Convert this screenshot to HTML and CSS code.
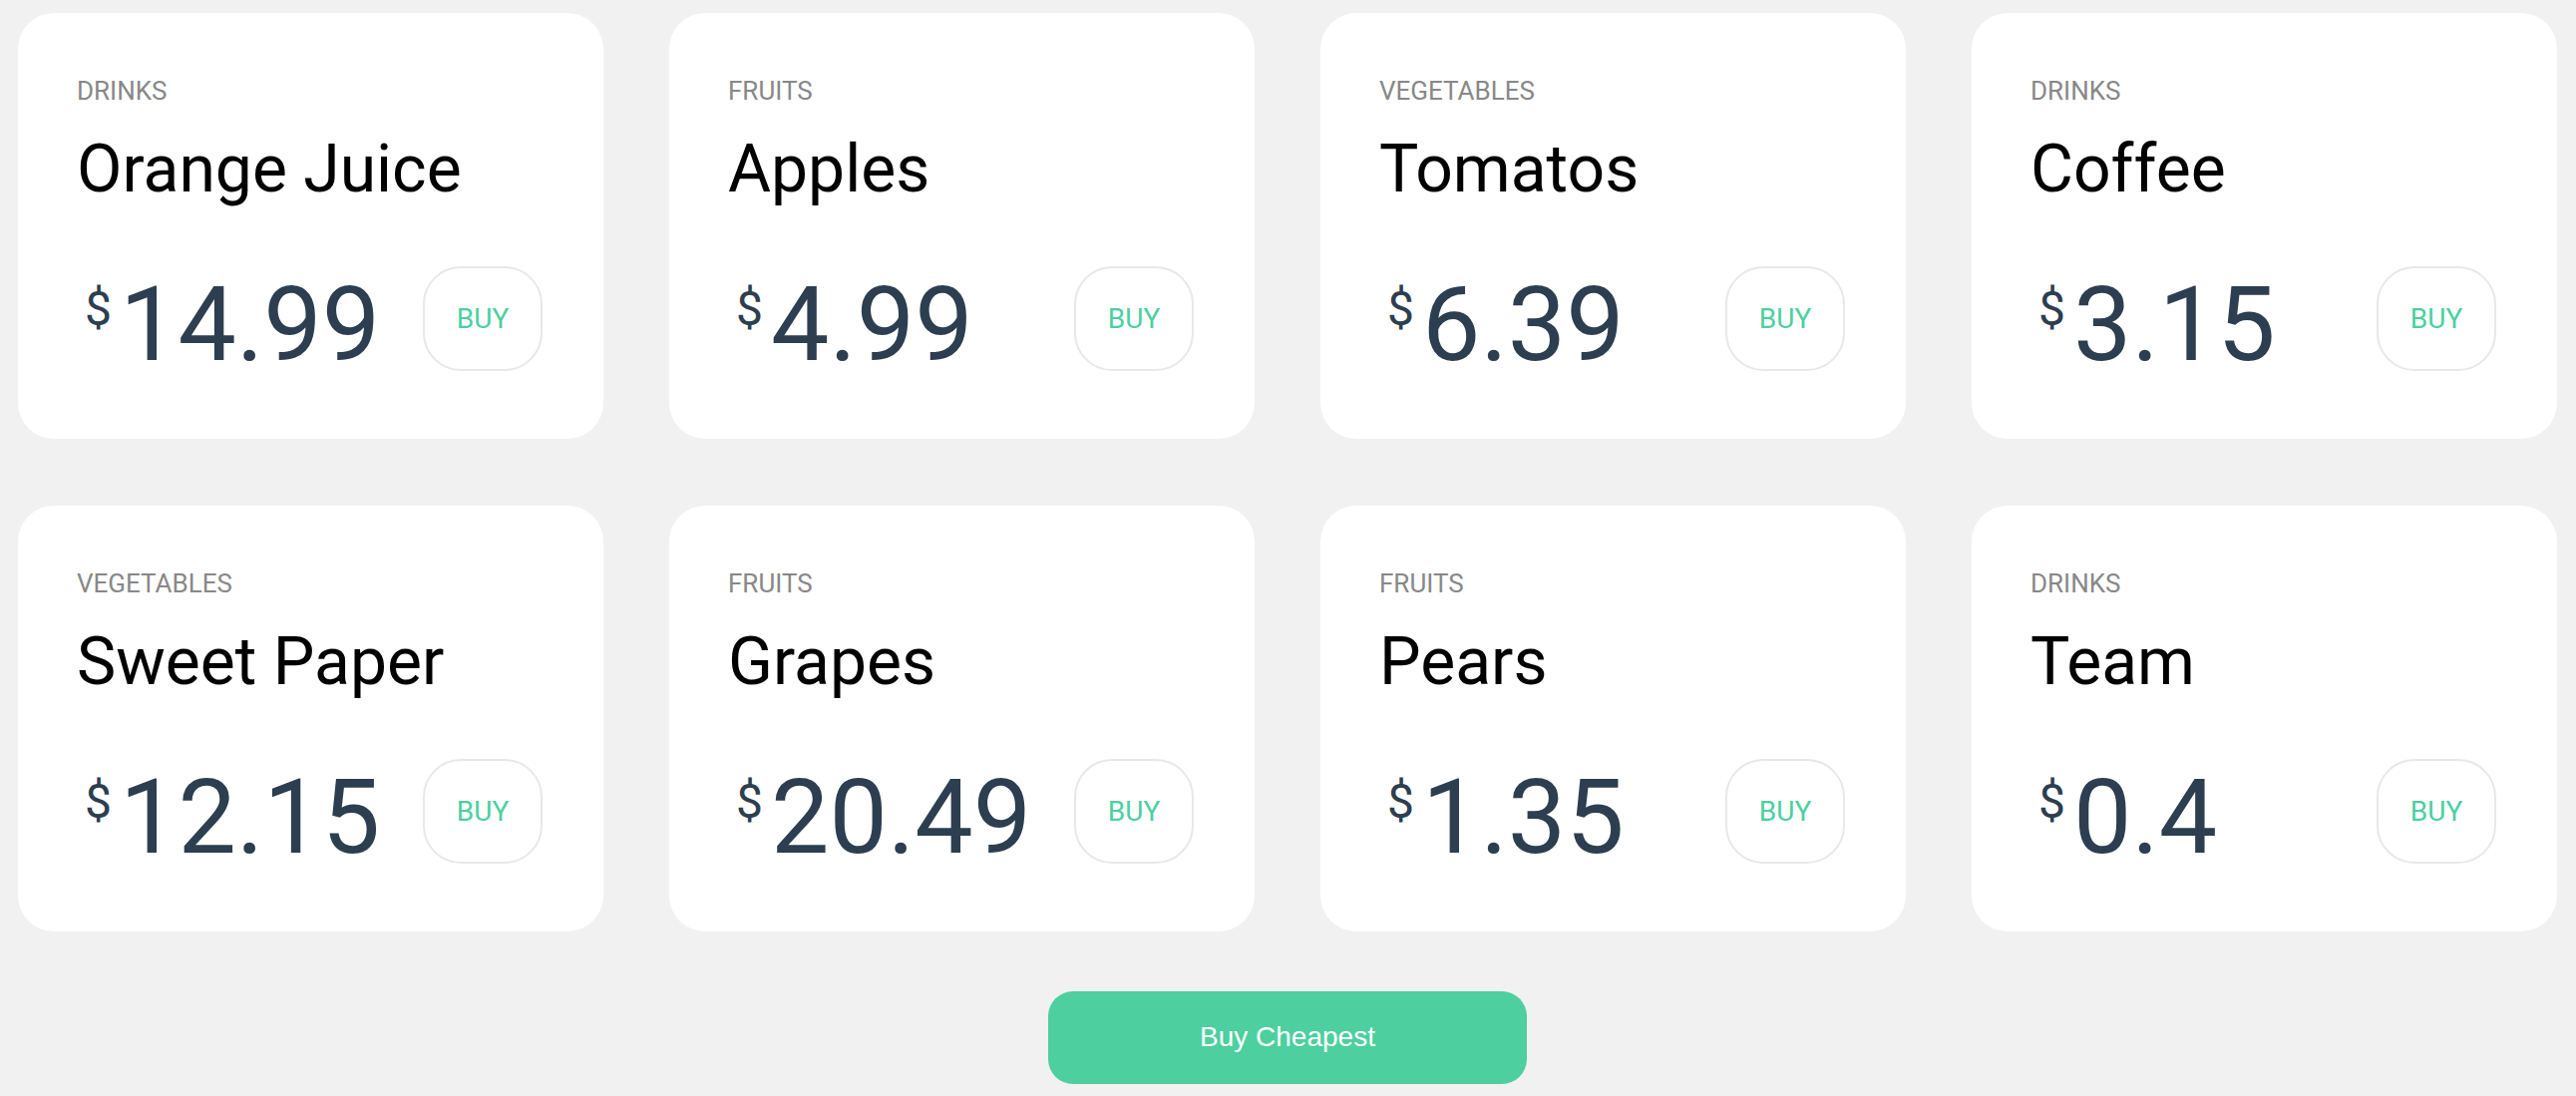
FILE: index.html
```html
<!DOCTYPE html>
<html lang="en">
<head>
<meta charset="utf-8">
<title>Products</title>
<link rel="stylesheet" href="styles.css">
</head>
<body>
<div class="page">
  <div class="grid">
    <div class="card">
      <div class="category">DRINKS</div>
      <div class="name">Orange Juice</div>
      <div class="row">
        <div class="price"><span class="cur">$</span><span class="amount">14.99</span></div>
        <button class="buy">BUY</button>
      </div>
    </div>
    <div class="card">
      <div class="category">FRUITS</div>
      <div class="name">Apples</div>
      <div class="row">
        <div class="price"><span class="cur">$</span><span class="amount">4.99</span></div>
        <button class="buy">BUY</button>
      </div>
    </div>
    <div class="card">
      <div class="category">VEGETABLES</div>
      <div class="name">Tomatos</div>
      <div class="row">
        <div class="price"><span class="cur">$</span><span class="amount">6.39</span></div>
        <button class="buy">BUY</button>
      </div>
    </div>
    <div class="card">
      <div class="category">DRINKS</div>
      <div class="name">Coffee</div>
      <div class="row">
        <div class="price"><span class="cur">$</span><span class="amount">3.15</span></div>
        <button class="buy">BUY</button>
      </div>
    </div>
    <div class="card">
      <div class="category">VEGETABLES</div>
      <div class="name">Sweet Paper</div>
      <div class="row">
        <div class="price"><span class="cur">$</span><span class="amount">12.15</span></div>
        <button class="buy">BUY</button>
      </div>
    </div>
    <div class="card">
      <div class="category">FRUITS</div>
      <div class="name">Grapes</div>
      <div class="row">
        <div class="price"><span class="cur">$</span><span class="amount">20.49</span></div>
        <button class="buy">BUY</button>
      </div>
    </div>
    <div class="card">
      <div class="category">FRUITS</div>
      <div class="name">Pears</div>
      <div class="row">
        <div class="price"><span class="cur">$</span><span class="amount">1.35</span></div>
        <button class="buy">BUY</button>
      </div>
    </div>
    <div class="card">
      <div class="category">DRINKS</div>
      <div class="name">Team</div>
      <div class="row">
        <div class="price"><span class="cur">$</span><span class="amount">0.4</span></div>
        <button class="buy">BUY</button>
      </div>
    </div>
  </div>
  <div class="actions">
    <button class="cheapest">Buy Cheapest</button>
  </div>
</div>
</body>
</html>
```
FILE: styles.css
```css
html, body {
  margin: 0;
  padding: 0;
  background: #f1f1f1;
}

.page {
  padding: 13px 19px 0 18px;
  font-family: Roboto, "Liberation Sans", sans-serif;
}

.grid {
  display: grid;
  grid-template-columns: repeat(4, 1fr);
  column-gap: 66px;
  row-gap: 67px;
}

.card {
  background: #ffffff;
  border-radius: 36px;
  height: 427px;
  box-sizing: border-box;
  padding: 63px 61px 0 59px;
  display: flex;
  flex-direction: column;
}

.category {
  font-size: 26px;
  line-height: 30px;
  color: #888888;
}

.name {
  margin-top: 25px;
  font-size: 66px;
  line-height: 77px;
  color: #000000;
}

.row {
  margin-top: 59px;
  display: flex;
  justify-content: space-between;
  align-items: flex-start;
  height: 105px;
}

.price {
  display: flex;
  align-items: flex-start;
  margin-top: 7px;
  color: #2c3e50;
}

.cur {
  font-size: 48px;
  line-height: 48px;
  margin-top: 12px;
  margin-left: 8px;
  margin-right: 8px;
}

.amount {
  font-size: 104px;
  line-height: 104px;
}

.buy {
  width: 120px;
  height: 105px;
  box-sizing: border-box;
  border: 2px solid #e8e8e8;
  border-radius: 38px;
  background: #ffffff;
  color: #4ad0a0;
  font-family: Roboto, "Liberation Sans", sans-serif;
  font-size: 28px;
  padding: 0;
}

.actions {
  display: flex;
  justify-content: center;
  margin-top: 60px;
}

.cheapest {
  width: 480px;
  height: 93px;
  border: none;
  border-radius: 25px;
  background: #4dcfa0;
  color: #ffffff;
  font-family: "Liberation Sans", Arial, sans-serif;
  font-size: 28px;
  padding: 0 0 2px;
}
```
